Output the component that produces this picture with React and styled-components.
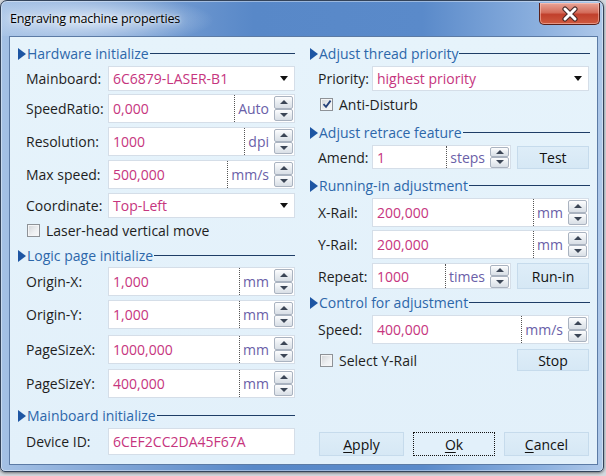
import React from 'react';
import styled, { createGlobalStyle } from 'styled-components';

const Global = createGlobalStyle`
  html, body { margin: 0; padding: 0; background: #d4d9df; }
  body { width: 606px; height: 476px; overflow: hidden; font-family: "Open Sans", "Noto Sans", sans-serif; font-size: 14px; color: #1e1e1e; }
  * { box-sizing: border-box; }
`;

const Window = styled.div`
  width: 604px;
  height: 472px;
  border: 1px solid #33435a;
  border-radius: 7px 7px 5px 5px;
  background: linear-gradient(90deg, #a4c1e5 0%, #7ea3d5 20%, #5888c8 42%, #5a8aca 70%, #8db1df 90%, #aec8e9 100%);
  box-shadow: inset 0 0 0 1px rgba(255, 255, 255, 0.4), 0 1px 3px rgba(0, 0, 0, 0.5);
  display: flex;
  flex-direction: column;
  overflow: hidden;
`;

const TitleBar = styled.div`
  height: 35px;
  display: flex;
  align-items: flex-start;
  padding-left: 9px;
  background: radial-gradient(ellipse 125px 26px at 88px 19px, rgba(222, 234, 248, 0.88), rgba(222, 234, 248, 0) 100%);
`;

const Title = styled.div`
  margin-top: 9px;
  font-size: 12.6px;
  color: #000;
  letter-spacing: -0.2px;
  text-shadow: 0 0 8px rgba(255, 255, 255, 0.9), 0 0 3px rgba(255, 255, 255, 0.8);
`;

const CloseBtn = styled.div`
  margin-left: auto;
  margin-right: 3px;
  margin-top: 2px;
  width: 61px;
  height: 22px;
  border: 1px solid #5a2019;
  border-top: none;
  border-radius: 0 0 5px 5px;
  background: linear-gradient(180deg, #e9a598 0%, #d46d5b 45%, #c1402c 55%, #cf5a3f 100%);
  box-shadow: inset 0 0 0 1px rgba(255, 210, 200, 0.5);
  display: flex;
  align-items: center;
  justify-content: center;
`;

const Client = styled.div`
  flex: 1;
  min-height: 0;
  margin: 0 5px 6px 8px;
  border: 1px solid #5c7ba5;
  background: linear-gradient(180deg, #e6f3fb 0%, #e2f0fa 100%);
  display: grid;
  grid-template-columns: 292px minmax(0, 1fr);
`;

const Column = styled.div`
  min-width: 0;
  display: flex;
  flex-direction: column;
  padding: 8px ${p => p.$pr}px 8px 8px;
`;

const Header = styled.div`
  display: flex;
  align-items: center;
  height: 16px;
  margin-top: ${p => p.$mt || 0}px;
  color: #2d67aa;
  font-size: 14px;
  white-space: nowrap;
`;

const Tri = styled.span`
  width: 0;
  height: 0;
  border-top: 6px solid transparent;
  border-bottom: 6px solid transparent;
  border-left: 8px solid #1d55a3;
  margin-right: 1px;
  margin-top: 2px;
`;

const HLine = styled.span`
  flex: 1;
  height: 1px;
  background: #1e3d66;
  margin-left: 1px;
  margin-top: 1px;
  margin-right: ${p => p.$mr || 0}px;
`;

const Row = styled.div`
  display: flex;
  align-items: center;
  height: ${p => p.$h}px;
  margin-top: ${p => p.$mt}px;
  padding-left: ${p => p.$pl ?? 8}px;
`;

const Label = styled.span`
  width: ${p => p.$w}px;
  flex: none;
  white-space: nowrap;
`;

const Box = styled.div`
  height: 100%;
  min-width: 0;
  ${p => (p.$w ? `width: ${p.$w}px; flex: none;` : 'flex: 1;')}
  background: #fff;
  border: 1px solid #d5dee8;
  display: flex;
  align-items: center;
`;

const Value = styled.span`
  flex: 1;
  min-width: 0;
  padding-left: 4px;
  color: #c6357e;
  white-space: nowrap;
`;

const Unit = styled.span`
  align-self: stretch;
  display: flex;
  align-items: center;
  border-left: 1px dotted #555;
  padding: 0 3px 0 3px;
  color: #6a60a8;
  white-space: nowrap;
`;

const Spin = styled.div`
  width: 19px;
  height: ${p => p.$h}px;
  margin: 0 1px 0 2px;
  display: flex;
  flex-direction: column;
  flex: none;
`;

const SpinHalf = styled.div`
  flex: 1;
  border: 1px solid #aab3c0;
  border-radius: 2px;
  background: linear-gradient(180deg, #fdfdfe 0%, #e9edf1 50%, #d9dfe6 100%);
  display: flex;
  align-items: center;
  justify-content: center;
`;

const SpinArrow = styled.span`
  width: 0;
  height: 0;
  border-left: 4px solid transparent;
  border-right: 4px solid transparent;
  ${p => (p.$down ? 'border-top: 4px solid #3c4656;' : 'border-bottom: 4px solid #3c4656;')}
`;

const ComboArrow = styled.span`
  width: 0;
  height: 0;
  border-left: 4px solid transparent;
  border-right: 4px solid transparent;
  border-top: 5px solid #111;
  margin-right: 6px;
`;

const CheckRow = styled.label`
  display: flex;
  align-items: center;
  height: 16px;
  margin-top: ${p => p.$mt}px;
  padding-left: ${p => p.$pl}px;
  white-space: nowrap;
`;

const CheckBox = styled.span`
  width: 13px;
  height: 13px;
  border: 1px solid #8e9297;
  background: linear-gradient(135deg, #d2d4d7 0%, #eef0f2 60%, #f8f8f9 100%);
  box-shadow: inset 0 0 0 1px #f4f5f6;
  margin-right: 6px;
  display: flex;
  align-items: center;
  justify-content: center;
  flex: none;
`;

const Button = styled.div`
  width: ${p => p.$w}px;
  height: ${p => p.$h}px;
  flex: none;
  margin-left: ${p => (p.$auto ? 'auto' : `${p.$ml || 0}px`)};
  background: linear-gradient(180deg, #deedf8 0%, #d6e8f5 100%);
  border: 1px solid #c6dbec;
  display: flex;
  align-items: center;
  justify-content: center;
  color: #111;
  white-space: nowrap;
  ${p => p.$focus && 'border: 1px dotted #111; background: #e2f0fa;'}
  u { text-decoration: underline; text-underline-offset: 2px; }
`;

const ButtonBar = styled.div`
  margin-top: auto;
  display: flex;
  justify-content: space-between;
  padding-left: 9px;
  height: 24px;
`;

const Spinner = ({ h }) => (
  <Spin $h={h}>
    <SpinHalf><SpinArrow /></SpinHalf>
    <SpinHalf><SpinArrow $down /></SpinHalf>
  </Spin>
);

const NumField = ({ label, lw, value, unit, h = 29, mt, w, sh = 25 }) => (
  <Row $h={h} $mt={mt}>
    <Label $w={lw}>{label}</Label>
    <Box $w={w}>
      <Value>{value}</Value>
      <Unit>{unit}</Unit>
      <Spinner h={sh} />
    </Box>
  </Row>
);

const Combo = ({ label, lw, value, mt }) => (
  <Row $h={25} $mt={mt}>
    <Label $w={lw}>{label}</Label>
    <Box>
      <Value>{value}</Value>
      <ComboArrow />
    </Box>
  </Row>
);

const Check = ({ checked, children, mt, pl }) => (
  <CheckRow $mt={mt} $pl={pl}>
    <CheckBox>
      {checked && (
        <svg width="10" height="10" viewBox="0 0 10 10">
          <path d="M1.5 5.2 L4 7.8 L8.6 1.6" fill="none" stroke="#27427a" strokeWidth="1.8" />
        </svg>
      )}
    </CheckBox>
    {children}
  </CheckRow>
);

const Section = ({ children, mt, mr }) => (
  <Header $mt={mt}>
    <Tri />
    {children}
    <HLine $mr={mr} />
  </Header>
);

export default function App() {
  return (
    <>
      <Global />
      <Window>
        <TitleBar>
          <Title>Engraving machine properties</Title>
          <CloseBtn>
            <svg width="20" height="16" viewBox="0 0 20 16">
              <path d="M5 3 L15 13 M15 3 L5 13" stroke="#4a2a28" strokeWidth="5.2" strokeLinecap="round" />
              <path d="M5 3 L15 13 M15 3 L5 13" stroke="#ffffff" strokeWidth="3" strokeLinecap="round" />
            </svg>
          </CloseBtn>
        </TitleBar>
        <Client>
          <Column $pr={7}>
            <Section mt={0} mr={0}>Hardware initialize</Section>
            <Combo label="Mainboard:" lw={82} value="6C6879-LASER-B1" mt={5} />
            <NumField label="SpeedRatio:" lw={82} value="0,000" unit="Auto" mt={3} />
            <NumField label="Resolution:" lw={82} value="1000" unit="dpi" mt={4} />
            <NumField label="Max speed:" lw={82} value="500,000" unit="mm/s" mt={4} />
            <Combo label="Coordinate:" lw={82} value="Top-Left" mt={4} />
            <Check mt={4} pl={9}>Laser-head vertical move</Check>
            <Section mt={9}>Logic page initialize</Section>
            <NumField label="Origin-X:" lw={82} value="1,000" unit="mm" mt={4} />
            <NumField label="Origin-Y:" lw={82} value="1,000" unit="mm" mt={4} />
            <NumField label="PageSizeX:" lw={82} value="1000,000" unit="mm" mt={6} />
            <NumField label="PageSizeY:" lw={82} value="400,000" unit="mm" mt={5} />
            <Section mt={9}>Mainboard initialize</Section>
            <Row $h={27} $mt={5}>
              <Label $w={82}>Device ID:</Label>
              <Box>
                <Value>6CEF2CC2DA45F67A</Value>
              </Box>
            </Row>
          </Column>
          <Column $pr={8}>
            <Section mt={0} mr={-1}>Adjust thread priority</Section>
            <Combo label="Priority:" lw={54} value="highest priority" mt={5} />
            <Check checked mt={5} pl={10}>Anti-Disturb</Check>
            <Section mt={12} mr={-1}>Adjust retrace feature</Section>
            <Row $h={24} $mt={5}>
              <Label $w={54}>Amend:</Label>
              <Box $w={139}>
                <Value>1</Value>
                <Unit>steps</Unit>
                <Spinner h={21} />
              </Box>
              <Button $w={72} $h={23} $auto>Test</Button>
            </Row>
            <Section mt={8} mr={-1}>Running-in adjustment</Section>
            <NumField label="X-Rail:" lw={54} value="200,000" unit="mm" mt={5} />
            <NumField label="Y-Rail:" lw={54} value="200,000" unit="mm" mt={3} />
            <Row $h={26} $mt={4}>
              <Label $w={54}>Repeat:</Label>
              <Box $w={139}>
                <Value>1000</Value>
                <Unit>times</Unit>
                <Spinner h={23} />
              </Box>
              <Button $w={72} $h={26} $auto>Run-in</Button>
            </Row>
            <Section mt={5} mr={-1}>Control for adjustment</Section>
            <NumField label="Speed:" lw={54} value="400,000" unit="mm/s" mt={5} />
            <Row $h={22} $mt={5} $pl={10}>
              <Check mt={0} pl={0}>Select Y-Rail</Check>
              <Button $w={72} $h={22} $auto>Stop</Button>
            </Row>
            <ButtonBar>
              <Button $w={85} $h={24}><span><u>A</u>pply</span></Button>
              <Button $w={82} $h={24} $focus><span><u>O</u>k</span></Button>
              <Button $w={85} $h={24}><span><u>C</u>ancel</span></Button>
            </ButtonBar>
          </Column>
        </Client>
      </Window>
    </>
  );
}
